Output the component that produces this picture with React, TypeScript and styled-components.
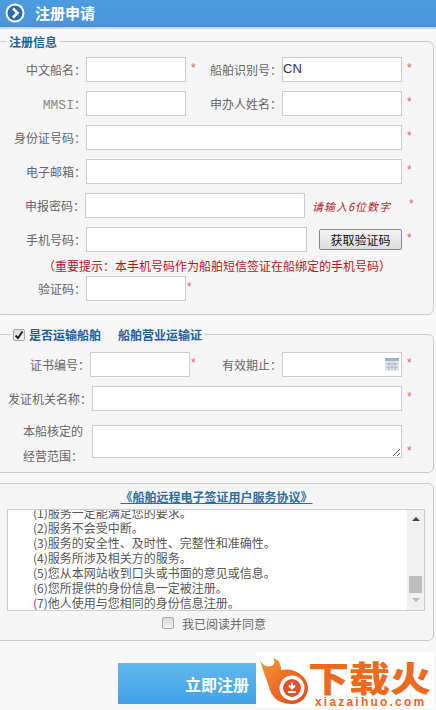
import React from "react";
import styled, { createGlobalStyle } from "styled-components";

const Global = createGlobalStyle`
  html, body { margin: 0; padding: 0; background: #fff; }
  #root { width: 436px; height: 710px; overflow: hidden; }
  * { box-sizing: border-box; }
`;

const cn = `"Noto Sans CJK SC", "Liberation Sans", sans-serif`;

const Page = styled.div`
  position: relative;
  width: 436px;
  height: 710px;
  overflow: hidden;
  background: #f7f7f7;
  font-family: ${cn};
  font-size: 12px;
  color: #666;
`;
const Header = styled.header`
  height: 29px;
  display: flex;
  align-items: center;
  gap: 10px;
  padding: 0 0 2px 5px;
  background: linear-gradient(#4c9ce0, #4b93d8);
  border-bottom: 2px solid #c4d9ea;
`;
const HeaderIcon = styled.svg`
  width: 20px;
  height: 20px;
  flex: none;
`;
const HeaderTitle = styled.h1`
  margin: 0;
  color: #fff;
  font-size: 15px;
  font-weight: 700;
  line-height: 20px;
`;
const Fieldset = styled.fieldset<{ $h: number; $mt: number }>`
  position: relative;
  height: ${(p) => p.$h}px;
  margin: ${(p) => p.$mt}px 2px 0 -5px;
  padding: 0;
  border: 1px solid #ccc;
  border-radius: 6px;
  background: #f5f5f5;
  min-width: 0;
`;
const Legend = styled.legend<{ $ml: number }>`
  margin-left: ${(p) => p.$ml}px;
  padding: 2px 3px 0 2px;
  height: 16px;
  display: flex;
  align-items: center;
  gap: 3px;
  color: #1f5f9f;
  font-size: 12px;
  font-weight: 700;
  line-height: 14px;
`;
const LegendGap = styled.span`
  width: 11px;
`;
const TickBox = styled.span`
  width: 12px;
  height: 12px;
  margin-right: 1px;
  display: flex;
  align-items: center;
  justify-content: center;
  border: 1px solid #a8a8a8;
  border-radius: 2px;
  background: linear-gradient(#dcdcdc, #f2f2f2);
`;
const TickMark = styled.svg`
  width: 10px;
  height: 10px;
`;
const Grid = styled.div<{ $pt: number }>`
  display: flex;
  flex-direction: column;
  padding-top: ${(p) => p.$pt}px;
`;
const Row = styled.div<{ $mt?: number }>`
  display: flex;
  align-items: center;
  height: 25px;
  margin-top: ${(p) => p.$mt ?? 9}px;
`;
const Label = styled.label<{ $w: number }>`
  width: ${(p) => p.$w}px;
  flex: none;
  text-align: right;
  white-space: nowrap;
  font-size: 12px;
  color: #666;
`;
const Mono = styled.span`
  font-family: "Liberation Mono", monospace;
  font-size: 13px;
  color: #888;
`;
const Field = styled.input<{ $w: number }>`
  width: ${(p) => p.$w}px;
  height: 25px;
  flex: none;
  padding: 0 0 2px 0;
  border: 1px solid #ccc;
  border-radius: 0;
  background: #fff;
  font-family: "Liberation Sans", sans-serif;
  font-size: 13px;
  color: #333;
  outline: none;
`;
const Star = styled.span<{ $ml?: number }>`
  width: 10px;
  flex: none;
  margin-left: ${(p) => p.$ml ?? 5}px;
  margin-top: -3px;
  color: #e6636b;
  font-size: 12px;
  font-family: "Liberation Sans", sans-serif;
`;
const Spacer = styled.span<{ $w: number }>`
  width: ${(p) => p.$w}px;
  flex: none;
`;
const Note = styled.em`
  width: 98px;
  flex: none;
  margin-left: 7px;
  color: #b3202a;
  font-size: 11px;
  letter-spacing: 1px;
  white-space: nowrap;
`;
const CodeButton = styled.button`
  width: 83px;
  height: 21px;
  flex: none;
  margin-left: 12px;
  padding: 0;
  border: 1px solid #8a8a8a;
  border-radius: 2px;
  background: linear-gradient(#f4f4f4, #dcdcdc);
  font-family: ${cn};
  font-size: 12px;
  color: #111;
`;
const Hint = styled.p`
  margin: 6px 0 0 47px;
  height: 16px;
  color: #b5141e;
  font-size: 12px;
  line-height: 16px;
  white-space: nowrap;
`;
const DateField = styled.div`
  position: relative;
  width: 120px;
  height: 25px;
  flex: none;
  border: 1px solid #ccc;
  background: #fff;
`;
const CalendarIcon = styled.svg`
  position: absolute;
  right: 2px;
  top: 5px;
  width: 14px;
  height: 13px;
`;
const AreaRow = styled.div`
  display: flex;
  align-items: flex-end;
  margin-top: 7px;
`;
const AreaLabel = styled.div`
  width: 87px;
  flex: none;
  margin: 0 9px -10px 0;
  text-align: right;
  line-height: 25px;
`;
const Area = styled.div`
  width: 310px;
  height: 33px;
  flex: none;
  position: relative;
  border: 1px solid #ccc;
  background: #fff;
`;
const Grip = styled.svg`
  position: absolute;
  right: 1px;
  bottom: 1px;
  width: 8px;
  height: 8px;
`;
const AgreementTitle = styled.a`
  display: block;
  margin: 5px 0 0 4px;
  height: 16px;
  text-align: center;
  color: #2b6f9e;
  font-size: 12px;
  font-weight: 700;
  line-height: 16px;
  text-decoration: underline;
`;
const TermsBox = styled.div`
  display: flex;
  width: 418px;
  height: 102px;
  margin: 4px 0 0 11px;
  border: 1px solid #ccc;
  background: #fff;
`;
const TermsText = styled.div`
  flex: 1;
  overflow: hidden;
  padding-left: 25px;
`;
const TermsLines = styled.div`
  margin-top: -5px;
  color: #555;
  font-size: 12px;
  line-height: 15px;
`;
const Scrollbar = styled.div`
  width: 17px;
  flex: none;
  display: flex;
  flex-direction: column;
  align-items: center;
  background: #f0f0f0;
`;
const ArrowUp = styled.span`
  width: 0;
  height: 0;
  margin-top: 7px;
  border-left: 4px solid transparent;
  border-right: 4px solid transparent;
  border-bottom: 4px solid #444;
`;
const Thumb = styled.span`
  width: 13px;
  height: 17px;
  margin-top: 55px;
  background: #bdbdbd;
`;
const ArrowDown = styled.span`
  width: 0;
  height: 0;
  margin-top: 5px;
  border-left: 4px solid transparent;
  border-right: 4px solid transparent;
  border-top: 4px solid #bbb;
`;
const AgreeRow = styled.label`
  display: flex;
  align-items: center;
  justify-content: center;
  gap: 8px;
  margin-top: 3px;
  padding-right: 1px;
  height: 18px;
  font-size: 12px;
  color: #666;
`;
const AgreeBox = styled.span`
  width: 12px;
  height: 12px;
  border: 1px solid #a8a8a8;
  border-radius: 2px;
  background: linear-gradient(#dcdcdc, #f2f2f2);
`;
const Footer = styled.div`
  display: flex;
  padding: 22px 0 0 118px;
`;
const Submit = styled.button`
  width: 198px;
  height: 41px;
  border: 0;
  padding: 0;
  background: linear-gradient(#63b7ee, #3ea3e8);
  color: #fff;
  font-family: ${cn};
  font-size: 16px;
  font-weight: 700;
`;
const Watermark = styled.div`
  position: absolute;
  left: 256px;
  top: 652px;
  width: 178px;
  height: 56px;
  display: flex;
  background: #fff;
`;
const Flame = styled.svg`
  width: 52px;
  height: 56px;
  flex: none;
`;
const Brand = styled.div`
  display: flex;
  flex-direction: column;
`;
const BrandName = styled.div`
  height: 36px;
  margin-top: 8px;
  color: #ea6a20;
  font-size: 41px;
  font-weight: 900;
  line-height: 41px;
  white-space: nowrap;
  transform: scaleY(0.85);
  transform-origin: top left;
`;
const BrandUrl = styled.div`
  margin: 1px 0 0 7px;
  color: #e8651c;
  font-family: "Liberation Sans", sans-serif;
  font-size: 12px;
  font-weight: 700;
  letter-spacing: 2.2px;
  line-height: 10px;
  white-space: nowrap;
`;

const terms = [
  "(1)服务一定能满足您的要求。",
  "(2)服务不会受中断。",
  "(3)服务的安全性、及时性、完整性和准确性。",
  "(4)服务所涉及相关方的服务。",
  "(5)您从本网站收到口头或书面的意见或信息。",
  "(6)您所提供的身份信息一定被注册。",
  "(7)他人使用与您相同的身份信息注册。",
];

export default function App() {
  return (
    <Page>
      <Global />
      <Header>
        <HeaderIcon viewBox="0 0 20 20">
          <circle cx="10" cy="10" r="9.5" fill="#fff" />
          <circle cx="10" cy="10" r="7.5" fill="#2a6cb4" />
          <path d="M8 5.5 12.5 10 8 14.5" fill="none" stroke="#fff" strokeWidth="2.6" />
        </HeaderIcon>
        <HeaderTitle>注册申请</HeaderTitle>
      </Header>

      <Fieldset $h={282} $mt={4}>
        <Legend $ml={11}>注册信息</Legend>
        <Grid $pt={8}>
          <Row $mt={0}>
            <Label $w={90}>中文船名：</Label>
            <Field $w={100} />
            <Star>*</Star>
            <Label $w={81}>船舶识别号：</Label>
            <Field $w={120} defaultValue="CN" />
            <Star>*</Star>
          </Row>
          <Row>
            <Label $w={90}>
              <Mono>MMSI</Mono>：
            </Label>
            <Field $w={100} />
            <Spacer $w={15} />
            <Label $w={81}>申办人姓名：</Label>
            <Field $w={120} />
            <Star>*</Star>
          </Row>
          <Row>
            <Label $w={90}>身份证号码：</Label>
            <Field $w={316} />
            <Star>*</Star>
          </Row>
          <Row>
            <Label $w={90}>电子邮箱：</Label>
            <Field $w={316} />
            <Star>*</Star>
          </Row>
          <Row>
            <Label $w={89}>申报密码：</Label>
            <Field $w={220} />
            <Note>请输入6位数字</Note>
            <Star $ml={-1}>*</Star>
          </Row>
          <Row>
            <Label $w={90}>手机号码：</Label>
            <Field $w={221} />
            <CodeButton>获取验证码</CodeButton>
            <Star>*</Star>
          </Row>
          <Hint>（重要提示：本手机号码作为船舶短信签证在船绑定的手机号码）</Hint>
          <Row $mt={2}>
            <Label $w={90}>验证码：</Label>
            <Field $w={100} />
            <Star $ml={1}>*</Star>
          </Row>
        </Grid>
      </Fieldset>

      <Fieldset $h={147} $mt={11}>
        <Legend $ml={15}>
          <TickBox>
            <TickMark viewBox="0 0 10 10">
              <path d="M1.5 5.5 4 8 8.5 1.5" fill="none" stroke="#222" strokeWidth="2" />
            </TickMark>
          </TickBox>
          是否运输船舶
          <LegendGap />
          船舶营业运输证
        </Legend>
        <Grid $pt={10}>
          <Row $mt={0}>
            <Label $w={94}>证书编号：</Label>
            <Field $w={100} />
            <Star $ml={1}>*</Star>
            <Label $w={81}>有效期止：</Label>
            <DateField>
              <CalendarIcon viewBox="0 0 14 13">
                <rect width="14" height="13" fill="#dfe6f0" />
                <rect width="14" height="3" fill="#9fb2cb" />
                <path d="M1 6h12M1 9h12M4 4v8M7 4v8M10 4v8" stroke="#a9b8cc" strokeWidth="1" />
              </CalendarIcon>
            </DateField>
            <Star>*</Star>
          </Row>
          <Row>
            <Label $w={96}>发证机关名称：</Label>
            <Field $w={310} />
            <Star>*</Star>
          </Row>
          <AreaRow>
            <AreaLabel>
              本船核定的
              <br />
              经营范围：
            </AreaLabel>
            <Area>
              <Grip viewBox="0 0 8 8">
                <path d="M1 8 8 1M5 8 8 5" stroke="#555" strokeWidth="1" />
              </Grip>
            </Area>
            <Star>*</Star>
          </AreaRow>
        </Grid>
      </Fieldset>

      <Fieldset $h={158} $mt={10}>
        <AgreementTitle>《船舶远程电子签证用户服务协议》</AgreementTitle>
        <TermsBox>
          <TermsText>
            <TermsLines>
              {terms.map((t) => (
                <div key={t}>{t}</div>
              ))}
            </TermsLines>
          </TermsText>
          <Scrollbar>
            <ArrowUp />
            <Thumb />
            <ArrowDown />
          </Scrollbar>
        </TermsBox>
        <AgreeRow>
          <AgreeBox />
          我已阅读并同意
        </AgreeRow>
      </Fieldset>

      <Footer>
        <Submit>立即注册</Submit>
      </Footer>

      <Watermark>
        <Flame viewBox="0 0 52 56">
          <defs>
            <linearGradient id="flameFill" x1="0" y1="0" x2="1" y2="1">
              <stop offset="0" stopColor="#f5a63a" />
              <stop offset="0.55" stopColor="#ec6a24" />
              <stop offset="1" stopColor="#e2481f" />
            </linearGradient>
          </defs>
          <path
            d="M2 1C3 10 9 16 15 14 19 13 19 9 17 6 23 8 25 11 25 18 38 15 52 24 52 36A16 16 0 0 1 36 52C25 52 17 47 14 38 12 30 6 18 2 1Z"
            fill="url(#flameFill)"
          />
          <circle cx="36" cy="36" r="12.5" fill="#fff" />
          <circle cx="36" cy="36" r="9" fill="#e3502a" />
          <path d="M36 30.5v5M33 33.5l3 3 3-3M32 40h8" fill="none" stroke="#fff" strokeWidth="2" />
        </Flame>
        <Brand>
          <BrandName>下载火</BrandName>
          <BrandUrl>xiazaihuo.com</BrandUrl>
        </Brand>
      </Watermark>
    </Page>
  );
}
